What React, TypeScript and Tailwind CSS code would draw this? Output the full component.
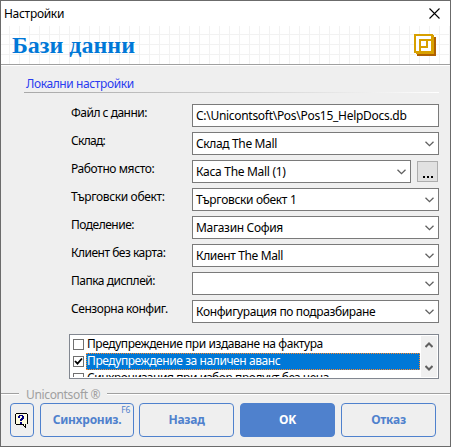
import React from 'react';

const FIELDS = [
  { label: 'Файл с данни:', value: 'C:\\Unicontsoft\\Pos\\Pos15_HelpDocs.db', combo: false, lt: 'tracking-[-0.5px]', vt: 'tracking-[-0.29px]' },
  { label: 'Склад:', value: 'Склад The Mall', combo: true, lt: 'tracking-[-0.7px]', vt: 'tracking-[-0.36px]' },
  { label: 'Работно място:', value: 'Каса The Mall (1)', combo: true, more: true, lt: 'tracking-[-0.4px]', vt: 'tracking-[-0.3px]' },
  { label: 'Търговски обект:', value: 'Търговски обект 1', combo: true, lt: 'tracking-[-0.36px]', vt: 'tracking-[-0.33px]' },
  { label: 'Поделение:', value: 'Магазин София', combo: true, lt: 'tracking-[-0.5px]', vt: 'tracking-[-0.34px]' },
  { label: 'Клиент без карта:', value: 'Клиент The Mall', combo: true, lt: 'tracking-[-0.5px]', vt: 'tracking-[-0.36px]' },
  { label: 'Папка дисплей:', value: '', combo: true, lt: 'tracking-[-0.5px]', vt: '' },
  { label: 'Сензорна конфиг.', value: 'Конфигурация по подразбиране', combo: true, lt: 'tracking-[-0.45px]', vt: 'tracking-[-0.37px]' },
];

const OPTIONS = [
  { text: 'Предупреждение при издаване на фактура', checked: false, selected: false },
  { text: 'Предупреждение за наличен аванс', checked: true, selected: true },
  { text: 'Синхронизация при избор продукт без цена', checked: false, selected: false },
];

function Chevron() {
  return (
    <svg className="mr-[4px] mt-px shrink-0" width="9" height="6" viewBox="0 0 9 6" fill="none" stroke="#606060" strokeWidth="1.3">
      <path d="M.5 .7 4.5 4.7 8.5 .7" />
    </svg>
  );
}

function Logo() {
  return (
    <svg width="22" height="22" viewBox="0 0 22 22" shapeRendering="crispEdges">
      <path d="M3 22V20H20V3H22V22Z" fill="#b06000" />
      <path d="M0 0H19V1H20V20H2V19H0Z" fill="#d8a000" />
      <path d="M2 2H17V5H5V17H2Z" fill="#fff" />
      <path d="M7 7H12V12H7ZM14 7H17V17H7V14H14Z" fill="#fff" />
    </svg>
  );
}

function HelpIcon() {
  return (
    <svg width="14" height="15" viewBox="0 0 14 15" shapeRendering="crispEdges">
      <path d="M1 0H12V1H13V11H11V15H10V14H9V13H8V12H1V11H0V1H1Z" fill="#000" />
      <path d="M1 1H12V11H10V13H9V11H1Z" fill="#fffde0" />
      <path d="M4 2H8V3H9V6H8V7H7V8H5V6H6V5H7V3H5V5H3V3H4ZM5 9H7V11H5Z" fill="#000080" />
    </svg>
  );
}

const BTN = 'relative flex h-[34px] items-center justify-center rounded-[4px] border border-[#4f81cd] text-[12px] tracking-[-0.25px] font-bold leading-none';

export default function App() {
  return (
    <div className="flex h-[447px] w-[451px] flex-col overflow-hidden border border-[#6b6b6b] bg-[#efefef] font-['Noto_Sans','Open_Sans',sans-serif] text-[12px] text-black">
      <div className="flex h-[25px] shrink-0 items-center justify-between bg-white pl-[3px] pr-[10px]">
        <span className="whitespace-nowrap leading-[25px] tracking-[-0.3px]">Настройки</span>
        <svg width="11" height="11" viewBox="0 0 11 11" stroke="#000" strokeWidth="1.1"><path d="M.5 .5 10.5 10.5M10.5 .5 .5 10.5" /></svg>
      </div>
      <div className="flex h-[38px] shrink-0 justify-between bg-white bg-[linear-gradient(to_right,#f2f2f2_1px,transparent_1px),linear-gradient(to_bottom,#f2f2f2_1px,transparent_1px)] bg-[length:10px_10px] bg-[position:8px_8px] pl-[11px] pr-[14px] pt-[8px]">
        <h1 className="-mt-[3px] whitespace-nowrap font-['Liberation_Serif',serif] text-[24px] font-bold leading-[28px] text-[#0078d7]">Бази данни</h1>
        <Logo />
      </div>
      <div className="h-[2px] shrink-0 border-t border-[#a0a0a0] bg-white" />
      <div className="ml-[23px] mr-[11px] mt-[10px] flex h-[17px] shrink-0 flex-col justify-between">
        <span className="pl-[2px] leading-[16px] tracking-[-0.4px] text-[#2a3cf0]">Локални настройки</span>
        <div className="h-px shrink-0 bg-gradient-to-r from-[#a8a8a8] via-[#cecece] to-white" />
      </div>
      <div className="mt-[11px] flex shrink-0 flex-col gap-[5px] pl-[70px] pr-[11px]">
        {FIELDS.map((f) => (
          <div key={f.label} className="flex h-[23px]">
            <span className={`w-[121px] shrink-0 whitespace-nowrap leading-[18px] ${f.lt}`}>{f.label}</span>
            <div className="flex min-w-0 flex-1 items-center justify-between border border-[#7a7a7a] bg-white pl-[3px]">
              <span className={`whitespace-nowrap leading-[21px] ${f.vt}`}>{f.value}</span>
              {f.combo && <Chevron />}
            </div>
            {f.more && (
              <div className="ml-[6px] mr-px mt-px flex h-[21px] w-[21px] items-end justify-center gap-[2px] border border-[#adadad] bg-[#e1e1e1] pb-[3px]">
                <i className="h-[2px] w-[2px] bg-black" /><i className="h-[2px] w-[2px] bg-black" /><i className="h-[2px] w-[2px] bg-black" />
              </div>
            )}
          </div>
        ))}
      </div>
      <div className="ml-[68px] mr-[11px] mt-[11px] flex h-[45px] shrink-0 border border-[#828790] bg-white p-px">
        <div className="flex-1 overflow-hidden">
          {OPTIONS.map((o) => (
            <div key={o.text} className="flex h-[17px] items-center">
              <span className="ml-[2px] mr-[2px] flex h-[11px] w-[11px] shrink-0 border border-[#707070] bg-white">
                {o.checked && <svg width="9" height="9" viewBox="0 0 9 9" fill="none" stroke="#000" strokeWidth="1.8"><path d="M1 4 3.5 6.7 8 1.5" /></svg>}
              </span>
              <span className={o.selected ? 'h-[17px] flex-1 whitespace-nowrap bg-[#0078d7] pl-px leading-[15px] tracking-[-0.42px] text-white outline-dotted outline-1 -outline-offset-1 outline-[#ff8728]' : 'h-[17px] flex-1 whitespace-nowrap pl-px leading-[15px] tracking-[-0.43px]'}>{o.text}</span>
            </div>
          ))}
        </div>
        <div className="ml-px flex w-[16px] flex-col items-center justify-between bg-[#f0f0f0] py-[6px]">
          <svg width="8" height="6" viewBox="0 0 8 6" fill="none" stroke="#606060" strokeWidth="2"><path d="M.5 5 4 1.5 7.5 5" /></svg>
          <svg width="8" height="6" viewBox="0 0 8 6" fill="none" stroke="#606060" strokeWidth="2"><path d="M.5 1 4 4.5 7.5 1" /></svg>
        </div>
      </div>
      <div className="mt-[6px] flex h-[17px] shrink-0 items-center">
        <div className="h-[2px] w-[18px] border-t border-[#a0a0a0] bg-white" />
        <span className="w-[88px] whitespace-nowrap pl-[7px] pt-[2px] leading-[17px] tracking-[-0.35px] text-[#a0a0a0]">Unicontsoft ®</span>
        <div className="h-[2px] flex-1 border-t border-[#a0a0a0] bg-white" />
      </div>
      <div className="mt-px flex shrink-0 pl-[9px]">
        <button className={`${BTN} w-[24px]`}><HelpIcon /></button>
        <button className={`${BTN} ml-[6px] w-[94px] text-[#4f81cd]`}>
          Синхрониз.
          <span className="absolute right-[3px] top-px text-[8.5px] font-normal leading-[10px]">F6</span>
        </button>
        <button className={`${BTN} ml-[5px] w-[95px] text-[#4f81cd]`}>Назад</button>
        <button className={`${BTN} ml-[6px] w-[95px] bg-[#4f81cd] text-white`}>OK</button>
        <button className={`${BTN} ml-[6px] w-[95px] text-[#4f81cd]`}>Отказ</button>
      </div>
    </div>
  );
}
